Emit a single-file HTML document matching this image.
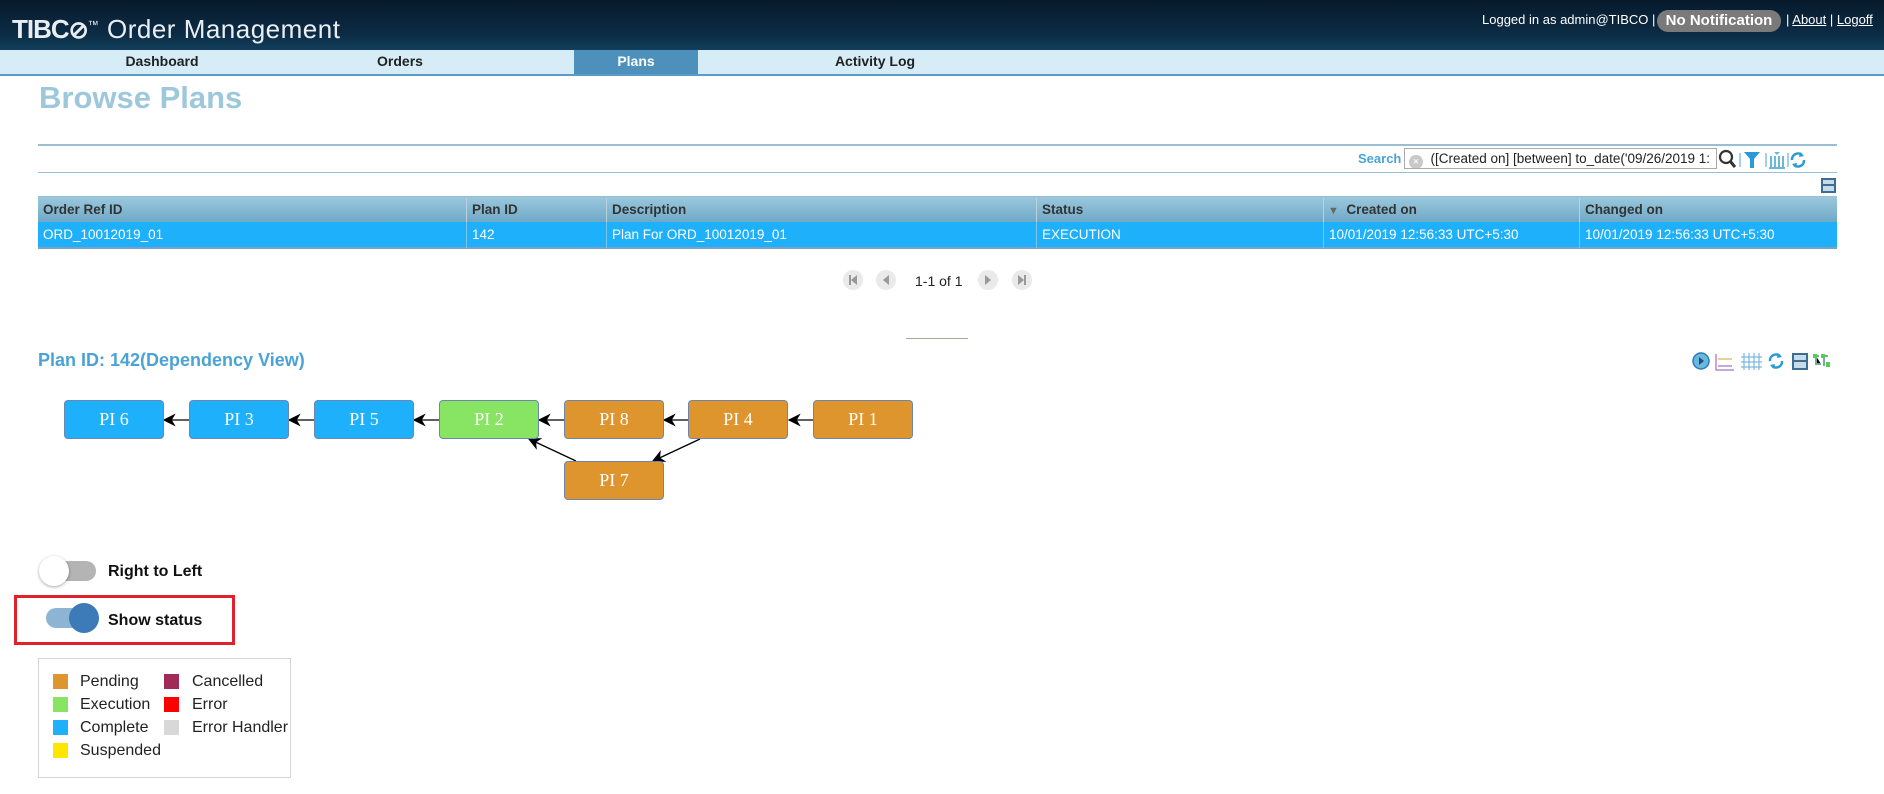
<!DOCTYPE html>
<html><head><meta charset="utf-8"><style>
*{margin:0;padding:0;box-sizing:border-box}
body{width:1884px;height:794px;position:relative;background:#fff;font-family:"Liberation Sans",Arial,sans-serif;overflow:hidden}
.a{position:absolute;white-space:nowrap}
#hdr{left:0;top:0;width:1884px;height:50px;background:linear-gradient(#071a2c,#0c2c45 70%,#123f5c)}
#nav{left:0;top:50px;width:1884px;height:26px;background:#d6edf8;border-bottom:2px solid #5a9bc8}
.tab{top:50px;height:24px;line-height:22px;font-size:14px;font-weight:bold;color:#222;text-align:center}
.th{top:198px;height:24px;line-height:24px;font-size:13.5px;color:#333;font-weight:bold;padding-left:5px;border-right:1px solid #b7d3e0}
.td{top:222px;height:26px;line-height:26px;font-size:13.5px;color:#fff;padding-left:5px;border-right:1px solid #7ec5ea}
.node{top:400px;width:100px;height:39px;border:1px solid #6b87b0;border-radius:4px;color:#fff;font-family:"Liberation Serif",serif;font-size:18px;text-align:center;line-height:37px}
.b{background:#1eb0fb}.o{background:#df952e}.g{background:#88e463}
.sq{width:15px;height:15px}
.lt{font-size:16px;color:#222}
</style></head><body>
<div class="a" id="hdr"></div>
<div class="a" style="left:12px;top:14px;font-size:26px;color:#e8eef2;letter-spacing:0.5px"><span style="font-weight:bold;letter-spacing:-1px">TIBC<span style="font-size:24px">⊘</span></span><sup style="font-size:11px">™</sup> Order Management</div>
<div class="a" style="left:1482px;top:12px;font-size:13px;color:#fff">Logged in as admin@TIBCO |</div>
<div class="a" style="left:1657px;top:10px;width:124px;height:22px;border-radius:11px;background:#7a7a7a;color:#fff;font-weight:bold;font-size:15px;line-height:22px;text-align:center">No Notification</div>
<div class="a" style="left:1786px;top:12px;font-size:13px;color:#fff">| <u>About</u> | <u>Logoff</u></div>
<div class="a" id="nav"></div>
<div class="a" style="left:574px;top:50px;width:124px;height:24px;background:#4d90bb"></div>
<div class="a tab" style="left:62px;width:200px">Dashboard</div>
<div class="a tab" style="left:300px;width:200px">Orders</div>
<div class="a tab" style="left:574px;width:124px;color:#fff">Plans</div>
<div class="a tab" style="left:775px;width:200px">Activity Log</div>
<div class="a" style="left:39px;top:80px;font-size:31px;font-weight:bold;color:#9dc8dc">Browse Plans</div>
<div class="a" style="left:38px;top:144px;width:1799px;height:2px;background:#9bbfd2"></div>
<div class="a" style="left:1358px;top:151px;font-size:13px;font-weight:bold;color:#4aa3d6">Search</div>
<div class="a" style="left:1404px;top:148px;width:313px;height:21px;border:1px solid #aaa;font-size:13.5px;line-height:19px;padding-left:4px;color:#222;overflow:hidden"><span style="display:inline-block;width:14px;height:14px;border-radius:50%;background:#c8c8c8;color:#fff;font-size:11px;line-height:14px;text-align:center;vertical-align:-2px">×</span>&nbsp; ([Created on] [between] to_date('09/26/2019 1:</div>
<svg class="a" style="left:1718px;top:149px" width="115" height="22"><circle cx="8" cy="8" r="6" fill="none" stroke="#333" stroke-width="2.2"/><line x1="12" y1="12" x2="17" y2="18" stroke="#333" stroke-width="3"/><line x1="22" y1="4" x2="22" y2="18" stroke="#4aa3d6"/><path d="M26 3h16l-6 7v9h-4v-9z" fill="#2a9ad6"/><line x1="48" y1="4" x2="48" y2="18" stroke="#4aa3d6"/><path d="M53 7v12M57 7v12M61 7v12M65 7v12M51 19h16" stroke="#6ab8dd" stroke-width="2"/><path d="M56 3h6l-3 3z" fill="#6ab8dd"/><line x1="70" y1="4" x2="70" y2="18" stroke="#4aa3d6"/><path d="M74 11a6 6 0 0 1 10-5" fill="none" stroke="#2a9ad6" stroke-width="2.5"/><path d="M82 3l4 4-5 1z" fill="#2a9ad6"/><path d="M86 11a6 6 0 0 1-10 5" fill="none" stroke="#2a9ad6" stroke-width="2.5"/><path d="M78 19l-4-4 5-1z" fill="#2a9ad6"/></svg>
<div class="a" style="left:38px;top:172px;width:1799px;height:1px;background:#9bbfd2"></div>
<div class="a" style="left:1821px;top:178px;width:15px;height:15px;border:2px solid #3d6d93;background:#c7dbe8"><div style="margin-top:4px;height:2px;background:#3d6d93"></div></div>
<div class="a" style="left:38px;top:196px;width:1799px;height:1px;background:#9bbfd2"></div>
<div class="a" style="left:38px;top:197px;width:1799px;height:25px;background:linear-gradient(#9ac8dd,#70a9c7)"></div>
<div class="a" style="left:38px;top:222px;width:1799px;height:27px;background:#1eb0fb;border-bottom:2px solid #7ca0c8"></div>
<div class="a th" style="left:38px;width:429px">Order Ref ID</div>
<div class="a th" style="left:467px;width:140px">Plan ID</div>
<div class="a th" style="left:607px;width:430px">Description</div>
<div class="a th" style="left:1037px;width:287px">Status</div>
<div class="a th" style="left:1324px;width:256px;padding-left:4px"><span style="color:#666;font-size:11px">▼</span> &nbsp;Created on</div>
<div class="a th" style="left:1580px;width:257px;border:0">Changed on</div>
<div class="a td" style="left:38px;width:429px">ORD_10012019_01</div>
<div class="a td" style="left:467px;width:140px">142</div>
<div class="a td" style="left:607px;width:430px">Plan For ORD_10012019_01</div>
<div class="a td" style="left:1037px;width:287px">EXECUTION</div>
<div class="a td" style="left:1324px;width:256px">10/01/2019 12:56:33 UTC+5:30</div>
<div class="a td" style="left:1580px;width:257px;border:0">10/01/2019 12:56:33 UTC+5:30</div>
<svg class="a" style="left:840px;top:269px" width="200" height="22">
<circle cx="13" cy="11" r="10" fill="#eaeaea"/><rect x="9" y="6" width="2" height="10" fill="#999"/><path d="M17 6v10l-6-5z" fill="#999"/>
<circle cx="46" cy="11" r="10" fill="#eaeaea"/><path d="M49 6v10l-6-5z" fill="#999"/>
<circle cx="148" cy="11" r="10" fill="#eaeaea"/><path d="M145 6v10l6-5z" fill="#999"/>
<circle cx="182" cy="11" r="10" fill="#eaeaea"/><path d="M178 6v10l6-5z" fill="#999"/><rect x="184" y="6" width="2" height="10" fill="#999"/></svg>
<div class="a" style="left:915px;top:273px;font-size:14px;color:#222">1-1 of 1</div>
<div class="a" style="left:906px;top:338px;width:62px;height:1px;background:#aaa49a"></div>
<div class="a" style="left:38px;top:350px;font-size:18px;font-weight:bold;color:#4aa3d6">Plan ID: 142(Dependency View)</div>
<svg class="a" style="left:1692px;top:350px" width="142" height="22"><circle cx="9" cy="11" r="8" fill="#6ab8dd" stroke="#2a7db8" stroke-width="1.5"/><path d="M7 7l5 4-5 4z" fill="#1a4f80"/><path d="M24 4v16h18M26 16h14" stroke="#b38bd0" stroke-width="1.5" fill="none"/><path d="M26 9h14" stroke="#e3c070" stroke-width="1.5"/><path d="M52 3v17M57 3v17M62 3v17M67 3v17M49 7h21M49 12h21M49 17h21" stroke="#7bb8e0" stroke-width="1.2"/><path d="M78 11a6 6 0 0 1 10-5" fill="none" stroke="#2a9ad6" stroke-width="2.5"/><path d="M86 3l4 4-5 1z" fill="#2a9ad6"/><path d="M90 11a6 6 0 0 1-10 5" fill="none" stroke="#2a9ad6" stroke-width="2.5"/><path d="M82 19l-4-4 5-1z" fill="#2a9ad6"/><rect x="101" y="4" width="14" height="15" fill="#c7dbe8" stroke="#3d6d93" stroke-width="2"/><line x1="101" y1="11" x2="115" y2="11" stroke="#3d6d93" stroke-width="2"/><path d="M122 6h5M130 6h6M124 6v8h5M132 6v10" stroke="#7a9" stroke-width="2"/><rect x="121" y="4" width="4" height="4" fill="#5c5"/><rect x="129" y="4" width="4" height="4" fill="#5c5"/><rect x="134" y="12" width="4" height="5" fill="#5c5"/></svg>
<svg class="a" style="left:0;top:390px" width="940" height="120"><defs><marker id="m" markerWidth="10" markerHeight="10" refX="9" refY="5" orient="auto"><path d="M0 0L10 5L0 10L3 5z" fill="#000"/></marker></defs>
<g stroke="#000" stroke-width="1.3" marker-end="url(#m)"><line x1="189" y1="30" x2="164" y2="30"/><line x1="314" y1="30" x2="289" y2="30"/><line x1="439" y1="30" x2="414" y2="30"/><line x1="564" y1="30" x2="539" y2="30"/><line x1="688" y1="30" x2="664" y2="30"/><line x1="813" y1="30" x2="789" y2="30"/><line x1="700" y1="49" x2="653" y2="71"/><line x1="576" y1="71" x2="529" y2="49"/></g></svg>
<div class="a node b" style="left:64px">PI 6</div>
<div class="a node b" style="left:189px">PI 3</div>
<div class="a node b" style="left:314px">PI 5</div>
<div class="a node g" style="left:439px">PI 2</div>
<div class="a node o" style="left:564px">PI 8</div>
<div class="a node o" style="left:688px">PI 4</div>
<div class="a node o" style="left:813px">PI 1</div>
<div class="a node o" style="left:564px;top:461px">PI 7</div>
<div class="a" style="left:48px;top:561px;width:48px;height:20px;border-radius:10px;background:#b4b4b4"></div>
<div class="a" style="left:39px;top:556px;width:30px;height:30px;border-radius:50%;background:#fff;box-shadow:0 1px 3px rgba(0,0,0,.35)"></div>
<div class="a" style="left:108px;top:563px;font-size:16px;font-weight:bold;color:#111">Right to Left</div>
<div class="a" style="left:14px;top:595px;width:221px;height:50px;border:3px solid #e2202a"></div>
<div class="a" style="left:46px;top:608px;width:48px;height:20px;border-radius:10px;background:#8eb4d4"></div>
<div class="a" style="left:69px;top:603px;width:30px;height:30px;border-radius:50%;background:#3d7ab8"></div>
<div class="a" style="left:108px;top:612px;font-size:16px;font-weight:bold;color:#111">Show status</div>
<div class="a" style="left:38px;top:658px;width:253px;height:120px;border:1px solid #d4d4d4"></div>
<div class="a sq" style="left:53px;top:674px;background:#df952e"></div><div class="a lt" style="left:80px;top:673px">Pending</div>
<div class="a sq" style="left:53px;top:697px;background:#88e463"></div><div class="a lt" style="left:80px;top:696px">Execution</div>
<div class="a sq" style="left:53px;top:720px;background:#1eb0fb"></div><div class="a lt" style="left:80px;top:719px">Complete</div>
<div class="a sq" style="left:53px;top:743px;background:#ffe600"></div><div class="a lt" style="left:80px;top:742px">Suspended</div>
<div class="a sq" style="left:164px;top:674px;background:#a02a58"></div><div class="a lt" style="left:192px;top:673px">Cancelled</div>
<div class="a sq" style="left:164px;top:697px;background:#ff0000"></div><div class="a lt" style="left:192px;top:696px">Error</div>
<div class="a sq" style="left:164px;top:720px;background:#d8d8d8"></div><div class="a lt" style="left:192px;top:719px">Error Handler</div>
</body></html>
